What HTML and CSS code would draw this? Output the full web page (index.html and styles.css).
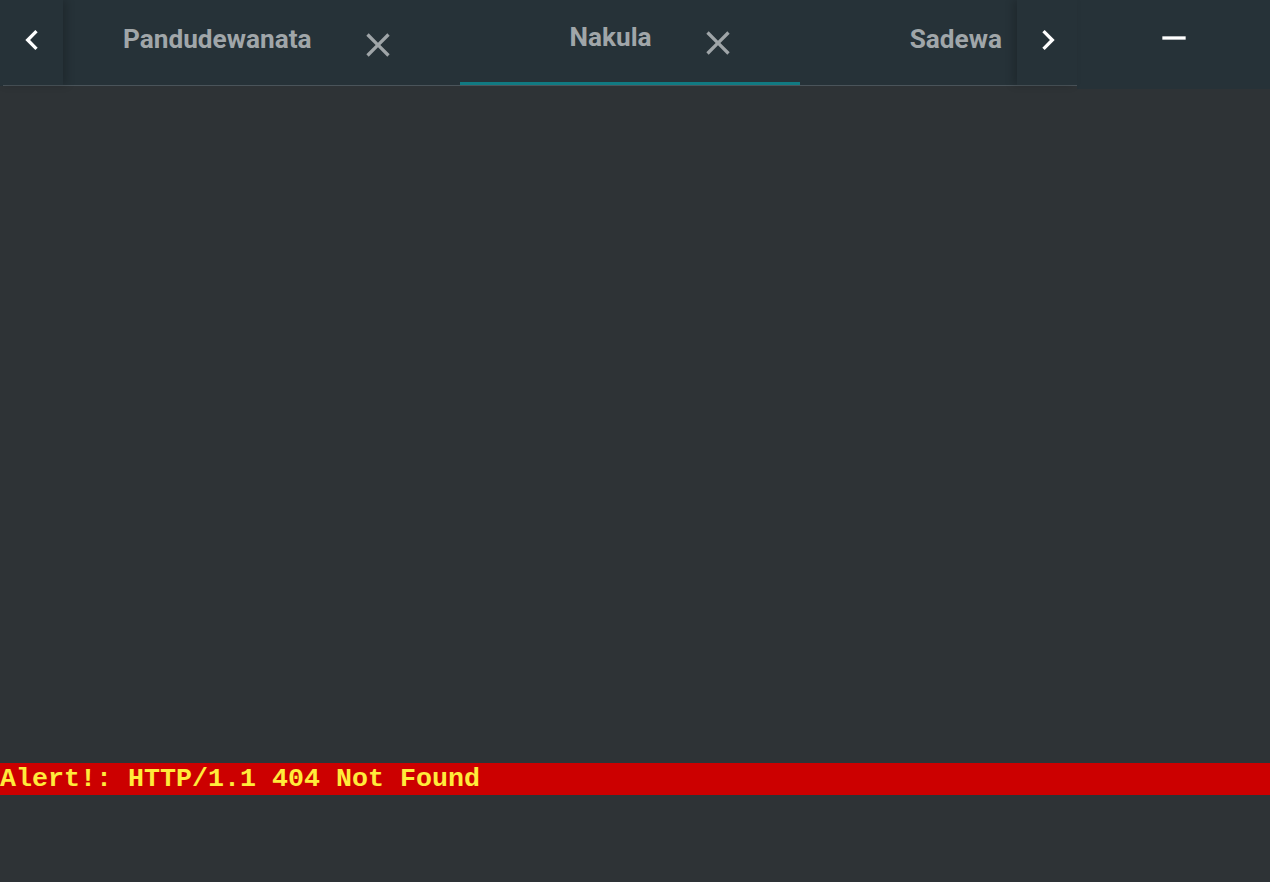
FILE: index.html
```html
<!DOCTYPE html>
<html lang="en">
<head>
<meta charset="utf-8">
<title>Tabs</title>
<link rel="stylesheet" href="styles.css">
</head>
<body>
<div class="app">
  <header class="toolbar">
    <div class="tabbar">
      <button class="scroll-btn left" aria-label="Scroll left">
        <svg viewBox="0 0 24 24" class="icon"><path d="M15.41 7.41L14 6l-6 6 6 6 1.41-1.41L10.83 12z"/></svg>
      </button>
      <div class="tab-viewport">
        <div class="tab-strip">
          <div class="tab">
            <span class="label">Pandudewanata</span>
            <svg viewBox="0 0 24 24" class="icon close"><path d="M19 6.41L17.59 5 12 10.59 6.41 5 5 6.41 10.59 12 5 17.59 6.41 19 12 13.41 17.59 19 19 17.59 13.41 12z"/></svg>
          </div>
          <div class="tab active">
            <span class="label">Nakula</span>
            <svg viewBox="0 0 24 24" class="icon close"><path d="M19 6.41L17.59 5 12 10.59 6.41 5 5 6.41 10.59 12 5 17.59 6.41 19 12 13.41 17.59 19 19 17.59 13.41 12z"/></svg>
          </div>
          <div class="tab">
            <span class="label">Sadewa</span>
            <svg viewBox="0 0 24 24" class="icon close"><path d="M19 6.41L17.59 5 12 10.59 6.41 5 5 6.41 10.59 12 5 17.59 6.41 19 12 13.41 17.59 19 19 17.59 13.41 12z"/></svg>
          </div>
        </div>
      </div>
      <button class="scroll-btn right" aria-label="Scroll right">
        <svg viewBox="0 0 24 24" class="icon"><path d="M8.59 16.59L10 18l6-6-6-6-1.41 1.41L13.17 12z"/></svg>
      </button>
    </div>
    <div class="window-actions">
      <button class="min-btn" aria-label="Minimize">
        <svg viewBox="0 0 24 24" class="icon"><path d="M19 13H5v-2h14v2z"/></svg>
      </button>
    </div>
  </header>
  <main class="content"></main>
  <div class="alert">Alert!: HTTP/1.1 404 Not Found</div>
  <footer class="footer"></footer>
</div>
</body>
</html>
```
FILE: styles.css
```css
html, body {
  margin: 0;
  padding: 0;
  height: 100%;
}
body {
  background: #2e3336;
  font-family: Roboto, "Noto Sans", sans-serif;
  overflow: hidden;
}
.app {
  display: flex;
  flex-direction: column;
  height: 882px;
}
.toolbar {
  display: flex;
  height: 89px;
  flex: none;
}
.tabbar {
  width: 1077px;
  height: 86px;
  display: flex;
  background: #263238;
  position: relative;
}
.tabbar::after {
  content: "";
  position: absolute;
  left: 3px;
  right: 0;
  bottom: 0;
  height: 1px;
  background: #4a545a;
}
.scroll-btn {
  flex: none;
  border: 0;
  padding: 0;
  margin: 0;
  background: #263238;
  display: flex;
  justify-content: flex-start;
  height: 85px;
  position: relative;
  z-index: 2;
  cursor: pointer;
  padding-top: 20px;
}
.scroll-btn.left {
  width: 63px;
  box-shadow: 4px 0 8px rgba(0, 0, 0, 0.18);
  padding-left: 12px;
}
.scroll-btn.right {
  width: 60px;
  box-shadow: -4px 0 8px rgba(0, 0, 0, 0.18);
  padding-left: 11px;
}
.scroll-btn .icon {
  width: 40px;
  height: 40px;
  fill: #ffffff;
}
.tab-viewport {
  flex: 1;
  overflow: hidden;
  height: 85px;
}
.tab-strip {
  display: flex;
  margin-left: -50px;
  height: 85px;
}
.tab {
  flex: none;
  display: flex;
  align-items: flex-start;
  height: 85px;
  box-sizing: border-box;
  padding-left: 110px;
  padding-right: 62px;
  border-bottom: 3px solid transparent;
}
.tab.active {
  border-bottom-color: #117a82;
}
.label {
  font-size: 26.2px;
  font-weight: 700;
  color: #a0a6a9;
  line-height: 30px;
  margin-top: 24px;
  white-space: nowrap;
}
.tab.active .label {
  margin-top: 22px;
}
.close {
  width: 40px;
  height: 40px;
  fill: #9fa5a8;
  margin-left: 46px;
  margin-top: 25px;
}
.tab.active .close {
  margin-top: 23px;
}
.window-actions {
  flex: 1;
  background: #263238;
  display: flex;
  justify-content: center;
}
.min-btn {
  border: 0;
  background: transparent;
  padding: 0;
  margin: 18px 0 0 0;
  width: 40px;
  height: 40px;
  cursor: pointer;
}
.min-btn .icon {
  width: 40px;
  height: 40px;
  fill: #ffffff;
  display: block;
}
.content {
  height: 674px;
  flex: none;
}
.alert {
  flex: none;
  height: 32px;
  background: #cc0000;
  color: #ffeb3b;
  font-family: "Liberation Mono", "Courier New", monospace;
  font-weight: bold;
  font-size: 26.67px;
  line-height: 32px;
  white-space: nowrap;
}
.footer {
  flex: 1;
}
```
